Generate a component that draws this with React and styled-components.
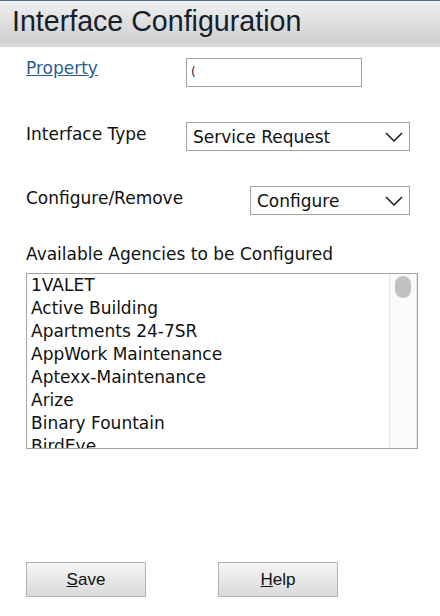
import React from "react";
import styled, { createGlobalStyle } from "styled-components";

const agencies = [
  "1VALET",
  "Active Building",
  "Apartments 24-7SR",
  "AppWork Maintenance",
  "Aptexx-Maintenance",
  "Arize",
  "Binary Fountain",
  "BirdEye",
];

const ChevronDown = () => (
  <svg width="18" height="10" viewBox="0 0 18 10" fill="none">
    <path d="M1 1l8 8 8-8" stroke="#222" strokeWidth="1.6" />
  </svg>
);

const App = () => {
  return (
    <>
      <GlobalStyle />
      <Page>
        <Header>
          <Title>Interface Configuration</Title>
        </Header>

        <Form>
          <Row>
            <LinkLabel href="#">Property</LinkLabel>
            <TextInput>(</TextInput>
          </Row>

          <Row $top={35}>
            <Label>Interface Type</Label>
            <Select $left={186} $width={224}>
              <span>Service Request</span>
              <ChevronDown />
            </Select>
          </Row>

          <Row $top={35}>
            <Label>Configure/Remove</Label>
            <Select $left={250} $width={160}>
              <span>Configure</span>
              <ChevronDown />
            </Select>
          </Row>

          <Caption>Available Agencies to be Configured</Caption>

          <ListBox>
            <Options>
              {agencies.map((name) => (
                <Option key={name}>{name}</Option>
              ))}
            </Options>
            <ScrollTrack>
              <ScrollThumb />
            </ScrollTrack>
          </ListBox>
        </Form>

        <Buttons>
          <Button>
            <u>S</u>ave
          </Button>
          <Button>
            <u>H</u>elp
          </Button>
        </Buttons>
      </Page>
    </>
  );
};

const GlobalStyle = createGlobalStyle`
  html, body {
    margin: 0;
    padding: 0;
    background: #fff;
  }
`;

const Page = styled.div`
  width: 440px;
  height: 616px;
  display: flex;
  flex-direction: column;
  font-family: "DejaVu Sans", Verdana, sans-serif;
  font-size: 17px;
  color: #111;
`;

const Header = styled.div`
  height: 42px;
  border-top: 1px solid #5a7082;
  border-bottom: 4px solid #d6dadd;
  background: linear-gradient(#f0f0f0, #cfcfcf);
  padding-left: 12px;
  display: flex;
  align-items: center;
`;

const Title = styled.h1`
  margin: 0;
  margin-top: -2px;
  font-family: "Liberation Sans", Arial, sans-serif;
  font-weight: 400;
  font-size: 28.6px;
  color: #14202c;
`;

const Form = styled.div`
  padding: 11px 0 0 26px;
  display: flex;
  flex-direction: column;
`;

const Row = styled.div`
  display: flex;
  align-items: flex-start;
  margin-top: ${({ $top }) => $top || 0}px;
  height: 29px;
  position: relative;
`;

const Label = styled.div`
  padding-top: 2px;
  line-height: 20px;
`;

const LinkLabel = styled.a`
  color: #2b5c93;
  text-decoration: underline;
  line-height: 20px;
  width: 160px;
`;

const TextInput = styled.div`
  box-sizing: border-box;
  width: 176px;
  height: 29px;
  border: 1px solid #a3a3a3;
  font-size: 12px;
  line-height: 27px;
  padding-left: 4px;
  color: #222;
`;

const Select = styled.div`
  position: absolute;
  left: ${({ $left }) => $left - 26}px;
  width: ${({ $width }) => $width}px;
  height: 29px;
  box-sizing: border-box;
  border: 1px solid #a3a3a3;
  display: flex;
  align-items: center;
  justify-content: space-between;
  padding: 0 6px 0 6px;
`;

const Caption = styled.div`
  margin-top: 29px;
  line-height: 20px;
`;

const ListBox = styled.div`
  margin-top: 9px;
  width: 392px;
  height: 176px;
  box-sizing: border-box;
  border: 1px solid #a3a3a3;
  display: flex;
  overflow: hidden;
`;

const Options = styled.div`
  flex: 1;
  padding-left: 4px;
`;

const Option = styled.div`
  height: 23px;
  line-height: 23px;
  white-space: nowrap;
`;

const ScrollTrack = styled.div`
  width: 28px;
  background: #fafafa;
  border-left: 1px solid #e6e6e6;
  border-right: 1px solid #e6e6e6;
  box-sizing: border-box;
  display: flex;
  justify-content: center;
  padding-top: 2px;
`;

const ScrollThumb = styled.div`
  width: 16px;
  height: 22px;
  border-radius: 8px;
  background: #c2c2c2;
`;

const Buttons = styled.div`
  margin-top: auto;
  margin-bottom: 19px;
  padding-left: 26px;
  display: flex;
  gap: 72px;
`;

const Button = styled.button`
  width: 120px;
  height: 35px;
  border: 1px solid #b3b3b3;
  background: linear-gradient(#f6f6f6, #d9d9d9);
  font-family: "Liberation Sans", Arial, sans-serif;
  font-size: 17px;
  color: #111;
  padding: 0;
`;

export default App;
